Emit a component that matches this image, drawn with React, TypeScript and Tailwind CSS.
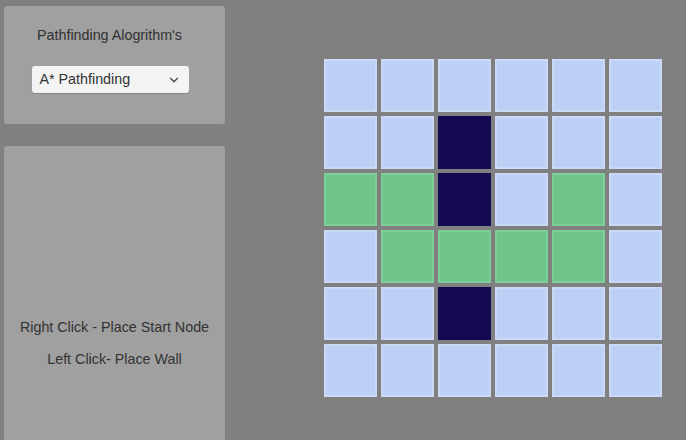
import { ChevronDown } from "lucide-react";

type Cell = "empty" | "wall" | "path";

const grid: Cell[][] = [
  ["empty", "empty", "empty", "empty", "empty", "empty"],
  ["empty", "empty", "wall", "empty", "empty", "empty"],
  ["path", "path", "wall", "empty", "path", "empty"],
  ["empty", "path", "path", "path", "path", "empty"],
  ["empty", "empty", "wall", "empty", "empty", "empty"],
  ["empty", "empty", "empty", "empty", "empty", "empty"],
];

function GridCell({ type }: { type: Cell }) {
  if (type === "wall") {
    return <div className="h-[53px] w-[53px] bg-[#140a52]" />;
  }
  if (type === "path") {
    return (
      <div className="h-[53px] w-[53px] border-2 border-[#7ccf98] bg-[#6ec48b]" />
    );
  }
  return (
    <div className="h-[53px] w-[53px] border-2 border-[#cbd9f7] bg-[#bccff5]" />
  );
}

export default function App() {
  return (
    <div
      className="flex h-[440px] w-[686px] overflow-hidden bg-[#808080] text-[#323232]"
      style={{ fontFamily: '"Liberation Sans", Arial, sans-serif' }}
    >
      <div className="ml-1 mt-1.5 flex w-[221px] flex-col gap-[22px]">
        <div className="flex h-[118px] flex-col items-center rounded-[3px] bg-[#a0a0a0] pt-[20px]">
          <div className="ml-[-10px] text-[14.3px] leading-[18px]">Pathfinding Alogrithm's</div>
          <div className="mt-[22px] ml-[-9px] flex h-[27px] w-[157px] items-center justify-between rounded-[3px] bg-[#f4f4f4] pl-2 pr-[8px] shadow-[0_1px_1px_rgba(0,0,0,0.15)]">
            <span className="text-[14.3px] leading-none">A* Pathfinding</span>
            <ChevronDown size={14} strokeWidth={2.2} className="text-[#444]" />
          </div>
        </div>
        <div className="flex flex-1 flex-col items-center rounded-t-[3px] bg-[#a0a0a0] pt-[172px]">
          <div className="text-[14.3px] leading-[18px]">Right Click - Place Start Node</div>
          <div className="mt-[14px] text-[14.3px] leading-[18px]">Left Click- Place Wall</div>
        </div>
      </div>
      <div className="ml-[99px] mt-[59px] grid h-fit grid-cols-6 gap-1">
        {grid.flat().map((c, i) => (
          <GridCell key={i} type={c} />
        ))}
      </div>
    </div>
  );
}
